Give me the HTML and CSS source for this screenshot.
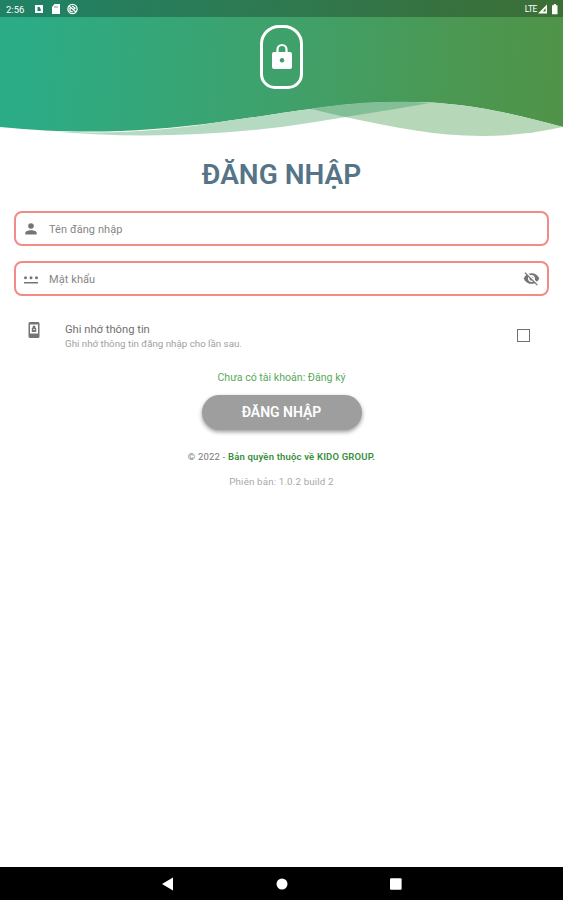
FILE: index.html
```
<!DOCTYPE html>
<html lang="vi">
<head>
<meta charset="utf-8">
<title>Đăng nhập</title>
<link rel="stylesheet" href="styles.css">
</head>
<body>
<div class="screen">
  <header class="hero">
    <svg class="waves" viewBox="0 0 563 150" preserveAspectRatio="none">
      <path fill="#fff" d="M0 127C80 135 145 132 220 122C300 111 330 104 400 102C462 101 510 113 563 127V150H0Z"/>
      <path fill="#b6d9c2" d="M50 131C110 135 170 130 220 122C300 111 330 104 400 102L430 103C385 110 350 117 281 127C200 137 120 138 50 131Z"/>
      <path fill="#b6d8b9" d="M311 109C350 103 375 102 410 102C468 102 515 114 563 127C480 145 420 133 345 117Z"/>
      <path fill="#82bf97" d="M311 109C345 103 390 100 430 103Q390 110 345 117Z"/>
    </svg>
    <div class="status">
      <span class="clock">2:56</span>
      <svg class="status-left" viewBox="0 0 46 12">
        <path fill="#fff" fill-rule="evenodd" d="M1 2h8v8H1zM3.500 4v4h3.300V6.500L5.500 4z"/>
        <path fill="#fff" d="M20.500 1H26v10h-8V4z"/>
        <path stroke="#418e6f" stroke-width=".8" d="M21 3v2M23 3v2"/>
        <circle cx="38.500" cy="6" r="4.600" fill="none" stroke="#fff" stroke-width="1.300"/>
        <path fill="none" stroke="#fff" stroke-width="1.300" d="M35 3l7 6M38 3l3 2-2 2M36 5v3l3 1"/>
      </svg>
      <span class="lte">LTE</span>
      <svg class="status-right" viewBox="0 0 20 12">
        <path fill="#fff" fill-rule="evenodd" d="M0 10.500L9 1.500v9zM5 8.500h2.500V5z"/>
        <path fill="#fff" d="M14 2.200H15.800V1h2v1.200h1.700v9H14z"/>
      </svg>
    </div>
    <div class="badge">
      <svg viewBox="0 0 20 26">
        <path fill="none" stroke="#fff" stroke-width="2.200" d="M5.500 10V6.500a4.500 4.500 0 0 1 9 0V10"/>
        <path fill="#fff" fill-rule="evenodd" d="M2 9h16q2 0 2 2v13q0 2-2 2H2q-2 0-2-2V11q0-2 2-2zM10 15a2.300 2.300 0 1 0 .01 0z"/>
      </svg>
    </div>
  </header>
  <main>
    <h1>ĐĂNG NHẬP</h1>
    <div class="field">
      <svg class="lead" viewBox="0 0 16 16"><circle cx="8" cy="5" r="2.800" fill="#757575"/><path fill="#757575" d="M2.300 13.500v-1.500C2.300 8.300 13.700 8.300 13.700 12v1.500z"/></svg>
      <span class="t-user">Tên đăng nhập</span>
    </div>
    <div class="field">
      <svg class="lead" viewBox="0 0 16 16"><g fill="#757575"><circle cx="2.500" cy="6.800" r="1.500"/><circle cx="8" cy="6.800" r="1.500"/><circle cx="13.500" cy="6.800" r="1.500"/><path d="M1 11h14v1.500H1z"/></g></svg>
      <span class="t-pass">Mật khẩu</span>
      <svg class="eye" viewBox="0 0 24 24"><path fill="#757575" d="M12 7c2.760 0 5 2.240 5 5 0 .65-.13 1.260-.36 1.830l2.920 2.920c1.510-1.260 2.700-2.890 3.430-4.750-1.730-4.390-6-7.500-11-7.500-1.400 0-2.740.25-3.980.7l2.160 2.160C10.740 7.130 11.350 7 12 7zM2 4.270l2.740 2.740C3.080 8.300 1.780 10.020 1 12c1.730 4.390 6 7.500 11 7.500 1.550 0 3.030-.3 4.380-.84L19.730 22 21 20.730 3.270 3 2 4.270zM7.530 9.800l1.550 1.550c-.05.21-.08.43-.08.65 0 1.660 1.340 3 3 3 .22 0 .44-.03.65-.08l1.550 1.550c-.67.33-1.410.53-2.200.53-2.760 0-5-2.240-5-5 0-.79.2-1.530.53-2.200zm4.310-.78l3.150 3.150.02-.16c0-1.660-1.340-3-3-3l-.17.01z"/></svg>
    </div>
    <div class="remember">
      <svg class="device" viewBox="0 0 12 18"><path fill="#757575" fill-rule="evenodd" d="M2 1h8q1.500 0 1.500 1.500v13Q11.500 17 10 17H2Q.5 17 .5 15.500v-13Q.5 1 2 1zM2 3.500v9h8v-9z"/><path fill="#757575" d="M3.800 7h.7V6q0-1.500 1.500-1.500T7.500 6v1h.7v4H3.800z"/><circle cx="6" cy="8.500" r=".8" fill="#fff"/></svg>
      <div class="remember-text">
        <span class="t-title">Ghi nhớ thông tin</span>
        <span class="t-sub">Ghi nhớ thông tin đăng nhập cho lần sau.</span>
      </div>
      <span class="checkbox"></span>
    </div>
    <a class="signup">Chưa có tài khoản: Đăng ký</a>
    <button class="submit">ĐĂNG NHẬP</button>
    <p class="copy">© 2022 - <b>Bản quyền thuộc về KIDO GROUP.</b></p>
    <p class="version">Phiên bản: 1.0.2 build 2</p>
  </main>
  <nav class="navbar">
    <svg viewBox="0 0 12 14"><path fill="#fff" d="M0 7L11 .5v13z"/></svg>
    <svg viewBox="0 0 12 14"><circle cx="6" cy="7" r="5.500" fill="#fff"/></svg>
    <svg viewBox="0 0 12 14"><rect x="0" y="1.200" width="11.600" height="11.600" rx="1" fill="#fff"/></svg>
  </nav>
</div>
</body>
</html>
```
FILE: styles.css
```
* { box-sizing: border-box; }
body { margin: 0; background: #fff; font-family: Roboto, "Noto Sans", sans-serif; }
.screen { width: 563px; height: 900px; display: flex; flex-direction: column; overflow: hidden; }
svg { display: block; flex: none; }
span, a, p, h1 { white-space: nowrap; }

.hero { position: relative; height: 150px; flex: none; background: linear-gradient(93deg, #2bac87 3%, #3fa16b 50%, #4b9853 80%, #509348); }
.waves { position: absolute; inset: 0; width: 563px; height: 150px; }
.status { position: relative; height: 17px; display: flex; align-items: center; padding: 1px 5px 0 6px; background: rgba(0, 0, 0, .25); color: #fff; }
.clock { font-size: 9.500px; width: 28px; }
.status-left { width: 46px; height: 12px; }
.lte { font-size: 8.500px; margin-left: auto; letter-spacing: -.4px; }
.status-right { width: 20px; height: 12px; margin-left: 1px; }
.badge { position: relative; width: 43px; height: 64px; margin: 8px auto 0; border: 3px solid #fff; border-radius: 19px 19px 15px 15px; display: flex; justify-content: center; padding-top: 15px; }
.badge svg { width: 20px; height: 26px; }

main { flex: 1; display: flex; flex-direction: column; align-items: center; padding: 0 14px; }
h1 { margin: 8px 0 19px; font-size: 28px; line-height: 34px; font-weight: 600; color: #557487; }
.field { width: 535px; height: 35px; margin-bottom: 15px; display: flex; align-items: center; border: 2px solid #f28b86; border-radius: 8px; padding: 0 7px; font-size: 11px; letter-spacing: .08px; color: #858585; }
.field span { padding-top: 1px; }
.lead { width: 16px; height: 16px; margin-right: 10px; }
.eye { width: 17px; height: 17px; margin-left: auto; }
.remember { width: 535px; height: 32px; margin-top: 9px; padding: 0 19px 0 14px; display: flex; }
.device { width: 12px; height: 18px; margin-top: 1px; }
.remember-text { margin: 1px 0 0 25px; display: flex; flex-direction: column; align-items: flex-start; }
.t-title { font-size: 11.200px; line-height: 17px; color: #707070; }
.t-sub { font-size: 9.750px; line-height: 12px; color: #a0a0a0; }
.checkbox { width: 13px; height: 13px; margin: 9px 0 0 auto; border: 1px solid #707070; }
.signup { margin-top: 19px; font-size: 10.600px; line-height: 14px; color: #59a85d; }
.submit { margin: 10px 0 0; padding: 0; width: 160px; height: 35px; border: 0; border-radius: 18px; background: #9e9e9e; color: #fff; font: 600 14px/35px Roboto, sans-serif; box-shadow: 0 2px 4px rgba(0, 0, 0, .4); }
.copy { margin: 20px 0 0; font-size: 9.500px; line-height: 14px; letter-spacing: .18px; color: #777; }
.copy b { color: #388e3c; font-weight: 600; }
.version { margin: 11px 0 0; font-size: 9.750px; line-height: 14px; letter-spacing: .15px; color: #a8a8a8; }

.navbar { height: 33px; flex: none; background: #000; display: flex; justify-content: center; align-items: center; gap: 102px; }
.navbar svg { width: 12px; height: 14px; }
```
